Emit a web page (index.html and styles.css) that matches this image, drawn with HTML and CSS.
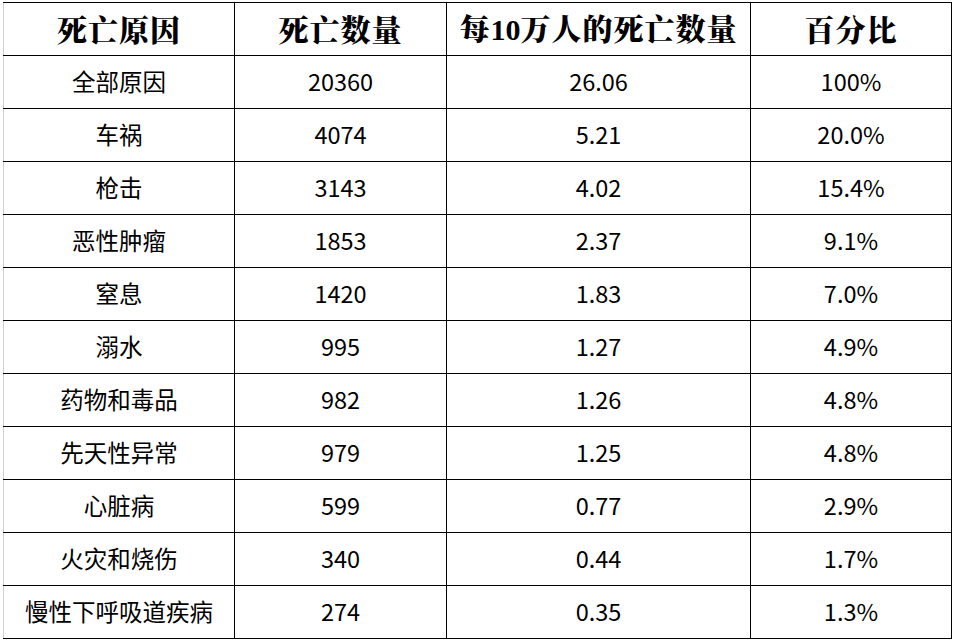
FILE: index.html
```html
<!DOCTYPE html>
<html lang="zh">
<head>
<meta charset="utf-8">
<link rel="stylesheet" href="styles.css">
</head>
<body>
<div class="sheet">
<table class="data">
<colgroup><col class="c1"><col class="c2"><col class="c3"><col class="c4"></colgroup>
<thead>
<tr><th>死亡原因</th><th>死亡数量</th><th>每<span class="num">10</span>万人的死亡数量</th><th>百分比</th></tr>
</thead>
<tbody>
<tr><td>全部原因</td><td>20360</td><td>26.06</td><td>100%</td></tr>
<tr><td>车祸</td><td>4074</td><td>5.21</td><td>20.0%</td></tr>
<tr><td>枪击</td><td>3143</td><td>4.02</td><td>15.4%</td></tr>
<tr><td>恶性肿瘤</td><td>1853</td><td>2.37</td><td>9.1%</td></tr>
<tr><td>窒息</td><td>1420</td><td>1.83</td><td>7.0%</td></tr>
<tr><td>溺水</td><td>995</td><td>1.27</td><td>4.9%</td></tr>
<tr><td>药物和毒品</td><td>982</td><td>1.26</td><td>4.8%</td></tr>
<tr><td>先天性异常</td><td>979</td><td>1.25</td><td>4.8%</td></tr>
<tr><td>心脏病</td><td>599</td><td>0.77</td><td>2.9%</td></tr>
<tr><td>火灾和烧伤</td><td>340</td><td>0.44</td><td>1.7%</td></tr>
<tr><td>慢性下呼吸道疾病</td><td>274</td><td>0.35</td><td>1.3%</td></tr>
</tbody>
</table>
</div>
</body>
</html>
```
FILE: styles.css
```css
html, body {
  margin: 0;
  padding: 0;
  background: #ffffff;
}
.sheet {
  padding: 2px 0 0 3px;
}
.data {
  border-collapse: collapse;
  table-layout: fixed;
  width: 948px;
  border-left: 1px solid #c8c8c8;
}
.c1 { width: 231px; }
.c2 { width: 212px; }
.c3 { width: 304px; }
.c4 { width: 201px; }
.data tr {
  height: 53px;
}
.data th, .data td {
  border-top: 1px solid #000;
  border-bottom: 1px solid #000;
  border-right: 1px solid #000;
  height: 52px;
  box-sizing: border-box;
  padding: 0 0 2px 0;
  line-height: 30px;
  text-align: center;
  vertical-align: middle;
  color: #000;
}
.data th:first-child, .data td:first-child {
  border-left: 1px solid #d0d0d0;
}
.data th {
  font-family: "Noto Serif CJK SC", "Source Han Serif SC", "Noto Sans CJK SC", serif;
  font-weight: 900;
  font-size: 30px;
  letter-spacing: 1px;
}
.data th .num {
  font-family: "Liberation Serif", serif;
  font-weight: bold;
  letter-spacing: 0;
}
.data td {
  font-family: "Noto Sans CJK SC", "Noto Sans", sans-serif;
  font-weight: 400;
  font-size: 23.5px;
}
```
